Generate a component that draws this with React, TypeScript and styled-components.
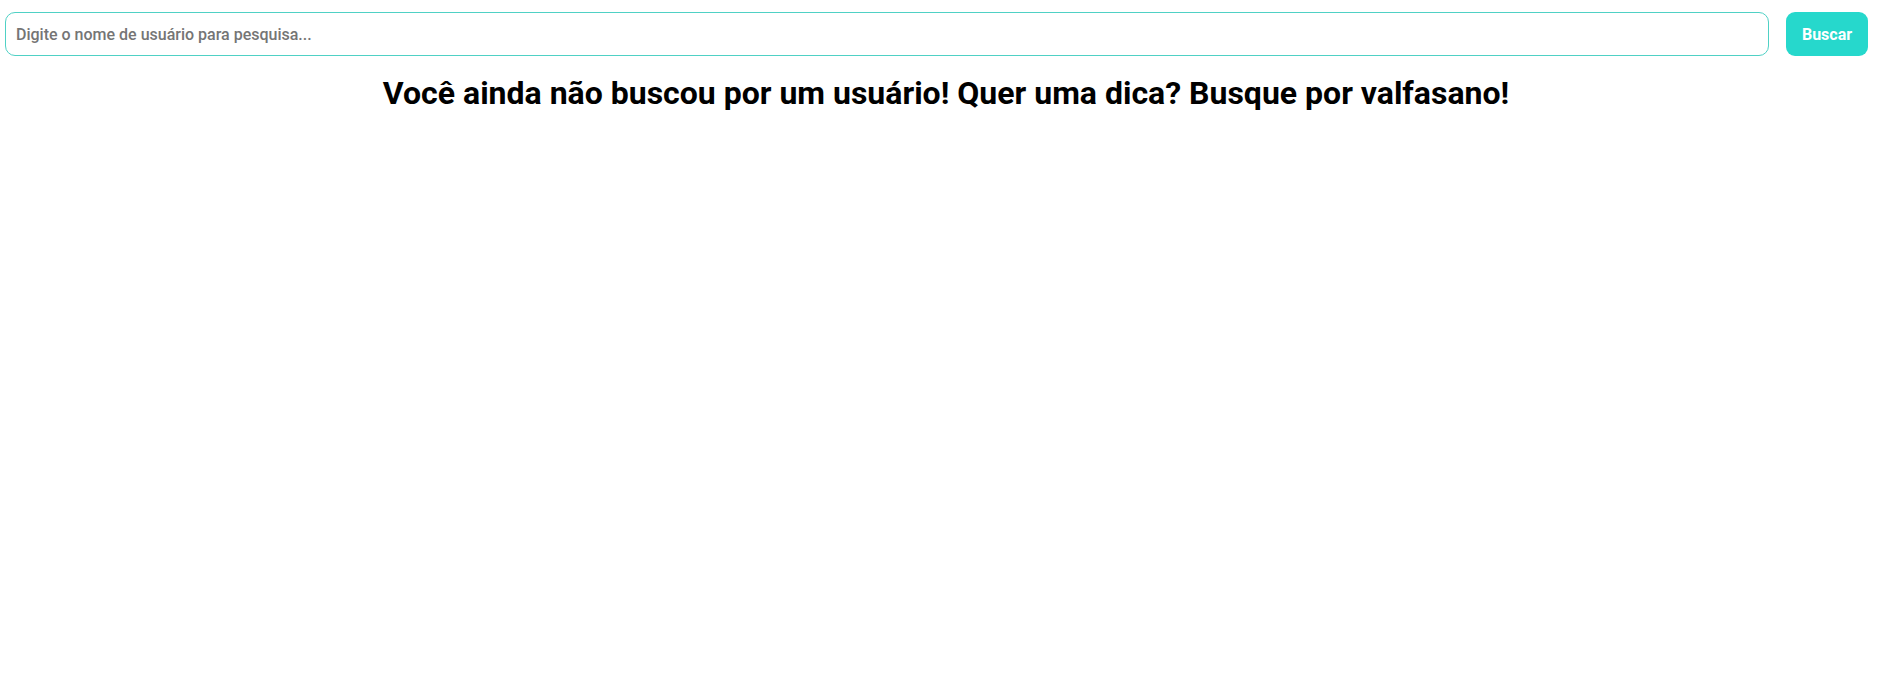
import React from "react";
import styled, { createGlobalStyle } from "styled-components";

const GlobalStyle = createGlobalStyle`
  html, body {
    margin: 0;
    padding: 0;
    background: #ffffff;
    font-family: Roboto, "Noto Sans", Arial, sans-serif;
  }
`;

const Page = styled.div`
  display: flex;
  flex-direction: column;
  padding: 12px 24px 0 5px;
`;

const SearchForm = styled.form`
  display: flex;
  align-items: stretch;
  gap: 17px;
`;

const SearchInput = styled.input`
  flex: 1;
  height: 44px;
  box-sizing: border-box;
  border: 1px solid #4fd1c5;
  border-radius: 10px;
  padding: 0 10px;
  font-family: Roboto, Arial, sans-serif;
  font-size: 16px;
  font-weight: 500;
  color: #333;
  outline: none;
  &::placeholder {
    color: #757575;
  }
`;

const SearchButton = styled.button`
  width: 82px;
  height: 44px;
  border: none;
  border-radius: 9px;
  background: #26d8cc;
  color: #ffffff;
  font-family: Roboto, Arial, sans-serif;
  font-weight: 700;
  font-size: 16px;
  cursor: pointer;
`;

const Message = styled.h1`
  margin: 18px 0 0 0;
  text-align: center;
  font-family: Roboto, Arial, sans-serif;
  font-weight: 700;
  font-size: 32px;
  color: #000;
  padding-left: 19px;
`;

export default function App() {
  return (
    <>
      <GlobalStyle />
      <Page>
        <SearchForm onSubmit={(e) => e.preventDefault()}>
          <SearchInput placeholder="Digite o nome de usuário para pesquisa..." />
          <SearchButton type="submit">Buscar</SearchButton>
        </SearchForm>
        <Message>
          Você ainda não buscou por um usuário! Quer uma dica? Busque por valfasano!
        </Message>
      </Page>
    </>
  );
}
